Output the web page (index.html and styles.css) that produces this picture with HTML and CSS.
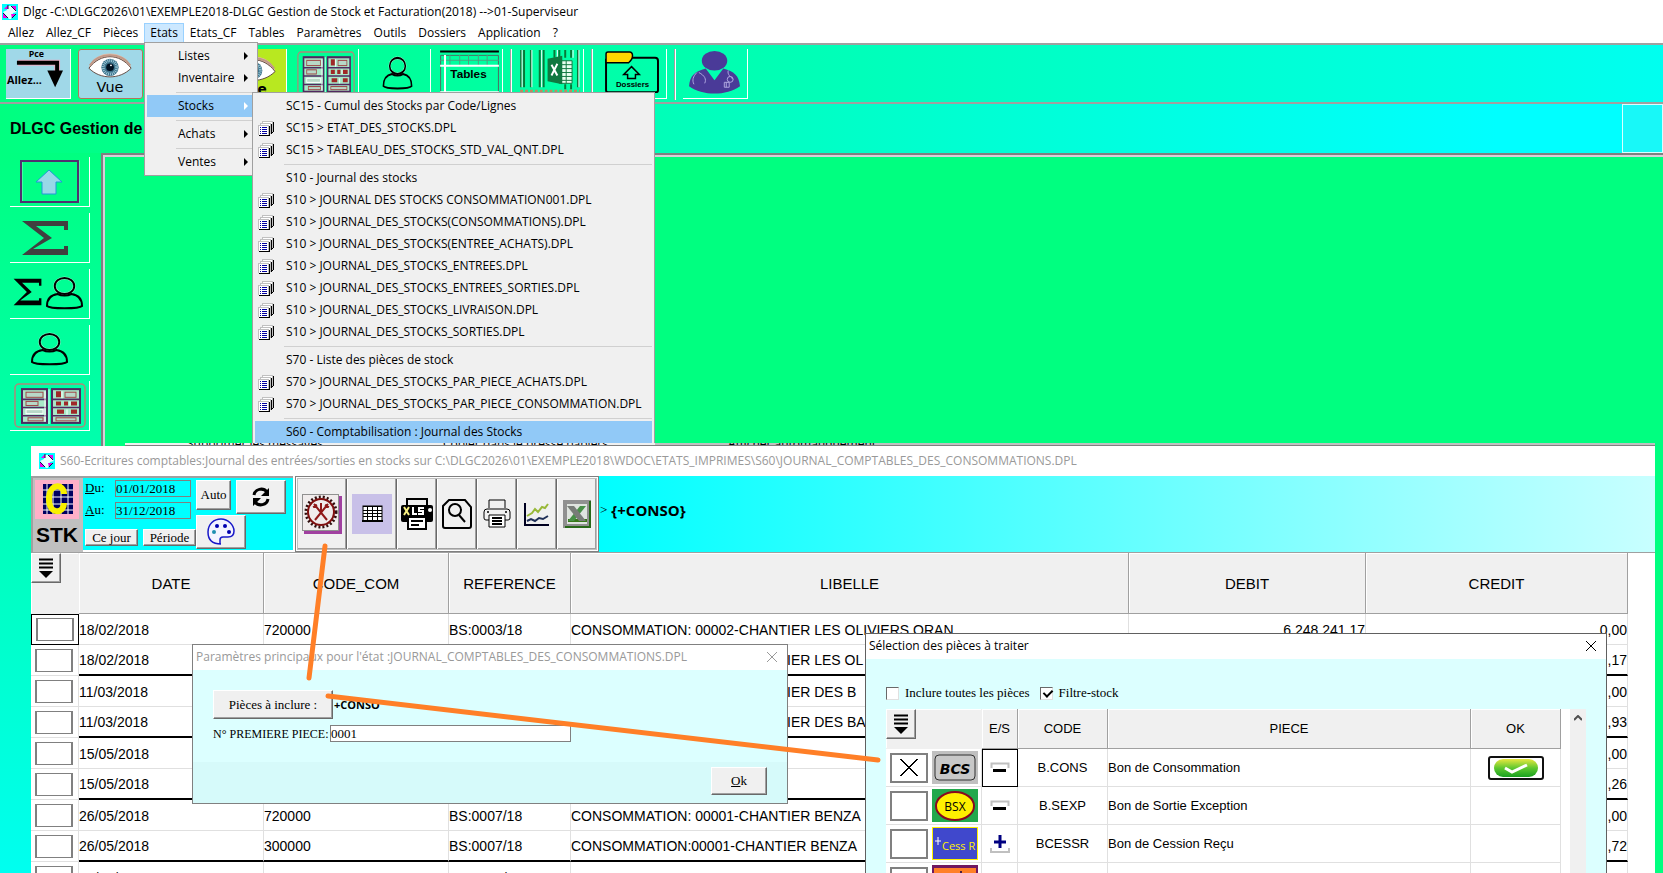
FILE: index.html
```html
<!DOCTYPE html>
<html lang="fr">
<head>
<meta charset="utf-8">
<title>Dlgc - Gestion de Stock et Facturation</title>
<link rel="stylesheet" href="styles.css">
</head>
<body>
<svg width="0" height="0" class="defs" aria-hidden="true">
  <symbol id="logo" viewBox="0 0 16 16">
    <rect width="16" height="16" fill="#00ffff"/>
    <path d="M6 2h3l6 6-4 1-2 6H7L1 8l4-2z" fill="#e8ffff"/>
    <path d="M2 5l4-4v4zM9 2h5v5zM1 9l5 5H1zM9 10h5l-4 4z" fill="#f000f0"/>
    <path d="M6 1v4M9 2l5 5M1 9l5 5M14 10l-4 4" stroke="#102040" fill="none"/>
  </symbol>
  <symbol id="pages" viewBox="0 0 16 15">
    <path d="M4 0h11v11H4z" fill="#c0c0c0"/><path d="M5 1h9v10H5z" fill="#fff"/><path d="M15 1h1v10h-1zM14 11h1v1h-1z"/>
    <path d="M2 2h11v11H2z" fill="#c0c0c0"/><path d="M3 3h9v10H3z" fill="#fff"/><path d="M13 3h1v10h-1z"/>
    <path d="M0 4h11v10H0z" fill="#c0c0c0"/><path d="M1 5h9v9H1z" fill="#fff"/><path d="M11 5h1v10H1v-1h10z"/>
    <path d="M2 6h1v1H2zM4 6h5v1H4zM2 8h1v1H2zM4 8h5v1H4zM2 10h1v1H2zM4 10h5v1H4zM2 12h1v1H2zM4 12h5v1H4z" fill="#0000a0"/>
  </symbol>
  <symbol id="person" viewBox="0 0 40 34" preserveAspectRatio="none">
    <g fill="none" stroke="#fff" stroke-width="3" opacity=".5"><ellipse cx="20" cy="10" rx="10" ry="8"/></g>
    <g fill="none" stroke="#000" stroke-width="2"><ellipse cx="20" cy="10" rx="10" ry="8"/><path d="M13 18C6 19 2 23 2 30c3 3 33 3 36 0 0-7-4-11-11-12-4 2-10 2-14 0z"/></g>
  </symbol>
  <symbol id="cabinet" viewBox="0 0 72 44" preserveAspectRatio="none">
    <rect x="1" y="1" width="70" height="42" rx="4" fill="none" stroke="#b08878" stroke-width="1.500"/>
    <g fill="#a8e8c8" stroke="#502860" stroke-width="2"><rect x="8" y="6" width="25" height="33"/><rect x="38" y="6" width="28" height="33"/></g>
    <path d="M8 16h25M8 24h25M8 32h25M38 16h28M38 24h28M38 32h28" stroke="#502860" stroke-width="1.500"/>
    <g fill="#b8d8c8" stroke="#a04848"><rect x="12" y="9" width="17" height="5"/><rect x="12" y="18" width="12" height="4"/><rect x="12" y="26" width="17" height="4" stroke="#fff"/><rect x="14" y="34" width="15" height="3"/><rect x="51" y="9" width="11" height="5"/><rect x="42" y="34" width="20" height="3"/></g>
    <path d="M42 8h5v6h-5zM42 18h5v4h-5zM50 18h4v4h-4zM57 18h6v4h-6zM43 26h7v4h-7zM57 26h6v4h-6z" fill="#a02828"/>
    <path d="M48 8v7M35 6v34M53 26v5M56 18v4M31 8v30" stroke="#fff"/>
  </symbol>
  <symbol id="sigma" viewBox="0 0 48 36" preserveAspectRatio="none">
    <path d="M1 1h46v9h-4V6H15l16 12L12 29h31v-3h4v9H1l22-17z"/>
  </symbol>
  <symbol id="eye" viewBox="0 0 64 32">
    <path d="M10 17C16-2 48-2 54 17z" fill="#e0bda8"/>
    <path d="M10 18C22 2 42 2 54 18 42 30 22 30 10 18z" fill="#fff" stroke="#604840"/>
    <path d="M11 15C20 1 44 1 53 15" fill="none" stroke="#c09888" stroke-width="2"/>
    <circle cx="32" cy="17" r="9" fill="#3a7088"/><circle cx="32" cy="17" r="7" fill="none" stroke="#9cc8d8" stroke-dasharray="1 1" stroke-width="3"/><circle cx="32" cy="17" r="4" fill="#001020"/><circle cx="33" cy="15" r="1" fill="#fff"/>
  </symbol>
  <symbol id="drop" viewBox="0 0 16 20">
    <path d="M1 1.500h14M1 5.500h14M1 9.500h14" stroke="#000" stroke-width="2"/><path d="M1 13h14l-7 7z"/>
  </symbol>
  <symbol id="minus" viewBox="0 0 20 12">
    <path d="M1.500 6V1.500h17V6" fill="none" stroke="#c0c0c0" stroke-width="2"/><path d="M3 8.500h13" stroke="#000" stroke-width="3"/>
  </symbol>
  <symbol id="close" viewBox="0 0 10 10"><path d="M0 0l10 10M10 0L0 10" stroke="currentColor" fill="none"/></symbol>
  <linearGradient id="shine" x2="0" y2="1"><stop offset="0" stop-color="#e8e840"/><stop offset=".5" stop-color="#60c830"/><stop offset="1" stop-color="#18a020"/></linearGradient>
</svg>

<header class="titlebar"><svg class="ico16"><use href="#logo"/></svg><span>Dlgc -C:\DLGC2026\01\EXEMPLE2018-DLGC Gestion de Stock et Facturation(2018) --&gt;01-Superviseur</span></header>
<nav class="menubar">
  <button>Allez</button><button>Allez_CF</button><button>Pièces</button><button class="open">Etats</button><button>Etats_CF</button><button>Tables</button><button>Paramètres</button><button>Outils</button><button>Dossiers</button><button>Application</button><button>?</button>
</nav>

<div class="toolbar">
  <button class="tool sky" aria-label="Allez"><svg viewBox="0 0 65 50"><text x="23" y="8" class="t-pce">Pce</text><path d="M12 14h40v11" fill="none" stroke="#e8b0c8" stroke-width="6"/><path d="M11 14h41v11" fill="none" stroke="#000" stroke-width="4"/><path d="M42 22h16l-8 17z"/><text x="1" y="36" class="t-allez">Allez...</text></svg></button>
  <button class="tool vue" aria-label="Vue"><svg viewBox="0 0 65 50"><use href="#eye" y="1" width="64" height="32"/><text x="32" y="44" text-anchor="middle" class="t-vue">Vue</text></svg></button>
  <button class="tool vue" aria-label="Vue 2"></button>
  <button class="tool lime" aria-label="Vue liste"><svg viewBox="0 0 65 50"><use href="#eye" y="5" width="64" height="32"/><text x="36" y="46" class="t-e">e</text></svg></button>
  <button class="tool" aria-label="Armoire"><svg viewBox="0 0 65 50"><use href="#cabinet" x="3" y="2" width="59" height="47"/></svg></button>
  <button class="tool" aria-label="Tiers"><svg viewBox="0 0 65 50"><use href="#person" x="16" y="7" width="32" height="35"/></svg></button>
  <button class="tool" aria-label="Tables"><svg viewBox="0 0 65 50"><path d="M2.500 50V6.500h59V50" fill="none" stroke="#506860"/><path d="M2 2.500h60" stroke="#000" stroke-width="2"/><path d="M2 11.500h60M12 6v12M22 6v12M31 6v12M41 6v12M50 6v12" stroke="#50a080"/><path d="M2 17h60M7 6v44M2 44h60" stroke="#fff" stroke-width="2"/><text x="31" y="30" text-anchor="middle" class="t-tables">Tables</text></svg></button>
  <i class="sep"></i>
  <button class="tool" aria-label="Codes barres"><svg viewBox="0 0 65 50"><path d="M2 1v38M5 1v38M12 1v38M21 1v38M25 1v38M36 1v8M41 1v8M47 1v8M53 1v8M60 1v38M47 36v5M53 36v5" stroke="#087838" stroke-width="2"/><path d="M3 1v38M13 1v38M23 1v38M39 1v8M55 1v8M61 1v38" stroke="#fff"/><path d="M41 12h13v23H41z" fill="#e8fff0" stroke="#107840"/><path d="M42 16h12M42 20h12M42 24h12M42 28h12M42 32h12M48 12v23" stroke="#107840"/><path d="M29 10l15-3v29l-15-3z" fill="#107840"/><path d="M33 16l6 11M39 15l-6 12" stroke="#fff" stroke-width="2"/><path d="M1 43h61" stroke="#c08860" stroke-width="3" stroke-dasharray="3 2"/></svg></button>
  <i class="sep"></i>
  <button class="tool folder" aria-label="Dossiers"><svg viewBox="0 0 65 50"><path d="M5 10v32q0 2 2 2h49q2 0 2-2V12q0-3-3-3H30" fill="none" stroke="#000" stroke-width="2"/><path d="M5 14V5q0-2 2-2h22q3 0 3 4t-4 7z" fill="#ffd800" stroke="#000" stroke-width="1.500"/><path d="M31 18l8 8h-4v4h-8v-4h-4z" fill="none" stroke="#000" stroke-width="1.500"/><text x="32" y="39" text-anchor="middle" class="t-dos">Dossiers</text></svg></button>
  <i class="sep"></i>
  <button class="tool" aria-label="Conseiller"><svg viewBox="0 0 65 50"><ellipse cx="32" cy="12" rx="13" ry="10" fill="#4a3a98"/><path d="M6 38c1-11 6-15 17-18l9 12 9-12c11 3 16 7 17 18-14 10-38 10-52 0z" fill="#4a3a98"/><path d="M14 24c-4 4-5 8-3 12M16 24c6 3 8 7 6 11M46 22c-1 4 2 6 5 9" fill="none" stroke="#b0a8e0"/><circle cx="48" cy="31" r="3" fill="none" stroke="#b0a8e0"/><path d="M42 34h5v5h-5zM44 34v5" fill="none" stroke="#b0a8e0"/></svg></button>
</div>
<div class="band"><h1>DLGC Gestion de</h1><div class="corner"></div></div>

<main class="work">
  <aside class="side">
    <button aria-label="Monter"><svg viewBox="0 0 80 50"><rect x="12" y="4" width="57" height="41" fill="none" stroke="#fff" opacity=".5"/><rect x="11" y="4" width="57" height="41" fill="none" stroke="#503070" stroke-width="2"/><path d="M39 13l13 12h-6v12H32V25h-6z" fill="#98d8e8" stroke="#2098d8"/></svg></button>
    <button aria-label="Totaux"><svg viewBox="0 0 80 50"><use href="#sigma" x="11" y="7" width="48" height="36" fill="#404040"/></svg></button>
    <button aria-label="Totaux par tiers"><svg viewBox="0 0 80 50"><use href="#sigma" x="3" y="9" width="29" height="28"/><use href="#person" x="35" y="7" width="39" height="34"/></svg></button>
    <button aria-label="Tiers"><svg viewBox="0 0 80 50"><use href="#person" x="20" y="7" width="39" height="34"/></svg></button>
    <button aria-label="Armoire"><svg viewBox="0 0 80 50"><use href="#cabinet" x="4" y="2" width="72" height="45"/></svg></button>
  </aside>
  <div class="canvas"></div>
</main>
<div class="strip"><span>Supprimer les messages</span><span>Copier dans le presse papiers</span><span>Afficher automatiquement</span></div>

<section class="report">
  <header class="caption"><svg class="ico16"><use href="#logo"/></svg><span>S60-Ecritures comptables:Journal des entrées/sorties en stocks sur C:\DLGC2026\01\EXEMPLE2018\WDOC\ETATS_IMPRIMES\S60\JOURNAL_COMPTABLES_DES_CONSOMMATIONS.DPL</span></header>
  <div class="rbar">
    <div class="stk"><svg viewBox="0 0 44 39"><rect width="44" height="39" fill="#ffb0c8"/><rect x="8" y="4" width="30" height="30" fill="#000060"/><path d="M12 4v30M18 4v30M26 4v30M33 4v30M8 10h30M8 17h30M8 24h30M8 30h30" stroke="#fff"/><path d="M29 14c0-11-15-11-15 5s15 15 15 4" fill="none" stroke="#f8f000" stroke-width="6"/></svg><b>STK</b></div>
    <form class="period">
      <div class="dates">
        <label><span><u>D</u>u:</span><input type="text" value="01/01/2018"></label>
        <label><span><u>A</u>u:</span><input type="text" value="31/12/2018"></label>
        <div class="quick"><button type="button" class="raised">Ce jour</button><button type="button" class="raised">Période</button></div>
      </div>
      <div class="acts">
        <div class="row1"><button type="button" class="raised auto">Auto</button><button type="button" class="raised sq" aria-label="Actualiser"><svg width="20" height="20" viewBox="0 0 20 20"><path d="M3 8c1-6 9-8 13-3M17 12c-1 6-9 8-13 3" fill="none" stroke="#000" stroke-width="3"/><path d="M18 1v8h-8zM2 19v-8h8z"/></svg></button></div>
        <button type="button" class="raised sq" aria-label="Couleurs"><svg width="30" height="28" viewBox="0 0 30 28"><path d="M15 26C5 26 2 20 2 14 2 6 8 1 15 1s13 6 13 12c0 5-3 6-6 6h-5c-2 0-3 1-3 3v4z" fill="#f4f4ff" stroke="#1818c8" stroke-width="1.500"/><g fill="#0000b0"><circle cx="11" cy="8" r="2"/><circle cx="19" cy="8" r="2"/><circle cx="23" cy="14" r="2"/></g><circle cx="8" cy="14" r="2" fill="#2090b0"/></svg></button>
      </div>
    </form>
    <div class="group">
      <button class="raised wide" aria-label="Paramètres"><svg width="40" height="40" viewBox="0 0 40 40"><path d="M2 38h36V2" fill="none" stroke="#a040a0" stroke-width="4"/><rect x="0.500" y="0.500" width="36" height="36" fill="#f0ecec" stroke="#909090"/><circle cx="19" cy="18" r="15" fill="none" stroke="#301010" stroke-width="3" stroke-dasharray="2 2"/><circle cx="19" cy="18" r="13" fill="none" stroke="#801010" stroke-width="2"/><path d="M12 10l13 16M26 10L13 26M19 9v11M11 13l4-2M23 11l4 2" stroke="#901818" stroke-width="2"/></svg></button>
      <button class="raised wide" aria-label="Tableau"><svg width="40" height="40" viewBox="0 0 40 40"><rect width="40" height="40" fill="#c8c0e8"/><rect x="11" y="12" width="19" height="15" fill="#fff" stroke="#000"/><path d="M11 12.500h19M11 16.500h19M11 19.500h19M11 22.500h19M15.500 12v15M20.500 12v15M25.500 12v15" stroke="#000"/><path d="M10 27h21" stroke="#000" stroke-width="2"/></svg></button>
      <button class="raised" aria-label="Imprimer XLS"><svg width="34" height="34" viewBox="0 0 34 34"><path d="M7 8V2h20v6" fill="none" stroke="#000" stroke-width="2"/><rect x="1" y="8" width="32" height="17" rx="2"/><path d="M4 10l5 8M9 10l-5 8" stroke="#f8f080" stroke-width="2"/><path d="M13 10v7h4M24 11h-5v3h4v3h-5" fill="none" stroke="#fff" stroke-width="2"/><circle cx="30" cy="13" r="2" fill="#fff"/><path d="M8 20h18v12H8z" fill="#fff" stroke="#000" stroke-width="2"/><path d="M11 24h12M11 28h8" stroke="#000" stroke-width="2"/></svg></button>
      <button class="raised" aria-label="Aperçu"><svg width="32" height="32" viewBox="0 0 32 32"><path d="M8 2h16l6 7v19q0 2-2 2H4q-2 0-2-2V8z" fill="none" stroke="#000" stroke-width="2"/><circle cx="14" cy="12" r="6" fill="none" stroke="#000" stroke-width="2"/><path d="M18 17l6 7" stroke="#000" stroke-width="2"/></svg></button>
      <button class="raised" aria-label="Imprimer"><svg width="28" height="30" viewBox="0 0 28 30"><path d="M6 9V1h16v8M6 21H3q-2 0-2-2v-6q0-3 3-3h20q3 0 3 3v6q0 2-2 2h-3" fill="none" stroke="#000"/><path d="M6 16h16v12H6z" fill="#fff" stroke="#000"/><path d="M9 19h10M9 22h10M9 25h10" stroke="#000" stroke-width="2"/><circle cx="5" cy="13" r="1"/><circle cx="23" cy="13" r="1"/></svg></button>
      <button class="raised" aria-label="Graphique"><svg width="28" height="26" viewBox="0 0 28 26"><path d="M2 2v22h24" fill="none" stroke="#000020" stroke-width="2"/><path d="M4 15l5-3 3-4 3 3 4-5 3 1 3-4" fill="none" stroke="#98b838" stroke-width="2"/><path d="M4 20l4-2 4 2 4-3 4 1 5-3" fill="none" stroke="#203058" stroke-width="2"/></svg></button>
      <button class="raised" aria-label="Excel"><svg width="28" height="28" viewBox="0 0 28 28"><rect x="2" y="2" width="24" height="24" fill="#dfe4df" stroke="#909090" stroke-width="4"/><path d="M27 1v26H2" fill="none" stroke="#286818" stroke-width="2"/><path d="M5 22h19v-3H5z" fill="#387818"/><path d="M23 6h-6L5 21h6z" fill="#489048"/><path d="M4 6h7l12 15h-7z" fill="#787c78"/></svg></button>
    </div>
    <div class="rband"><span>&gt;</span><b>{+CONSO}</b></div>
  </div>
  <table class="grid">
    <colgroup><col class="c-sel"><col class="c-m"><col class="c-m"><col class="c-ref"><col><col class="c-deb"><col class="c-cre"></colgroup>
    <thead><tr><th class="corner-h"><button class="raised dropb" aria-label="Menu du tableau"><svg width="16" height="20"><use href="#drop"/></svg></button></th><th>DATE</th><th>CODE_COM</th><th>REFERENCE</th><th>LIBELLE</th><th>DEBIT</th><th>CREDIT</th></tr></thead>
    <tbody>
      <tr><td class="focus"><input type="checkbox" aria-label="Ligne 1"></td><td>18/02/2018</td><td>720000</td><td>BS:0003/18</td><td>CONSOMMATION: 00002-CHANTIER LES OLIVIERS ORAN</td><td>6 248 241,17</td><td>0,00</td></tr>
      <tr class="end"><td><input type="checkbox" aria-label="Ligne 2"></td><td>18/02/2018</td><td></td><td></td><td>CONSOMMATION: 00002-CHANTIER LES OL</td><td></td><td>,17</td></tr>
      <tr><td><input type="checkbox" aria-label="Ligne 3"></td><td>11/03/2018</td><td></td><td></td><td>CONSOMMATION: 00003-CHANTIER DES B</td><td></td><td>,00</td></tr>
      <tr class="end"><td><input type="checkbox" aria-label="Ligne 4"></td><td>11/03/2018</td><td></td><td></td><td>CONSOMMATION: 00003-CHANTIER DES BA</td><td></td><td>,93</td></tr>
      <tr><td><input type="checkbox" aria-label="Ligne 5"></td><td>15/05/2018</td><td></td><td></td><td></td><td></td><td>,00</td></tr>
      <tr class="end"><td><input type="checkbox" aria-label="Ligne 6"></td><td>15/05/2018</td><td></td><td></td><td></td><td></td><td>,26</td></tr>
      <tr><td><input type="checkbox" aria-label="Ligne 7"></td><td>26/05/2018</td><td>720000</td><td>BS:0007/18</td><td>CONSOMMATION: 00001-CHANTIER BENZA</td><td></td><td>,00</td></tr>
      <tr class="end"><td><input type="checkbox" aria-label="Ligne 8"></td><td>26/05/2018</td><td>300000</td><td>BS:0007/18</td><td>CONSOMMATION:00001-CHANTIER BENZA</td><td></td><td>,72</td></tr>
      <tr><td><input type="checkbox" aria-label="Ligne 9"></td><td>12/06/2018</td><td>720000</td><td>BS:0010/18</td><td>CONSOMMATION: 00002-CHANTIER DES O</td><td></td><td>,00</td></tr>
    </tbody>
  </table>
</section>

<section class="dialog params">
  <header class="dcap"><span>Paramètres principaux pour l'état :JOURNAL_COMPTABLES_DES_CONSOMMATIONS.DPL</span><button class="x" aria-label="Fermer"><svg width="10" height="10"><use href="#close"/></svg></button></header>
  <div class="pbody">
    <div class="prow"><button class="raised inc">Pièces à inclure :</button><b>+CONSO</b></div>
    <label class="prow"><span class="lab">N° PREMIERE PIECE:</span><input type="text" value="0001"></label>
  </div>
  <footer class="pfoot"><button class="raised"><span><u>O</u>k</span></button></footer>
</section>

<section class="dialog select">
  <header class="dcap"><span>Sélection des pièces à traiter</span><button class="x" aria-label="Fermer"><svg width="10" height="10"><use href="#close"/></svg></button></header>
  <div class="sbody">
    <div class="opts"><label><input type="checkbox">Inclure toutes les pièces</label><label><input type="checkbox" checked>Filtre-stock</label></div>
    <div class="swrap">
    <table class="sgrid">
      <colgroup><col class="s-sel"><col class="s-es"><col class="s-code"><col><col class="s-ok"></colgroup>
      <thead><tr><th class="corner-h"><button class="raised dropb" aria-label="Menu des pièces"><svg width="16" height="20"><use href="#drop"/></svg></button></th><th>E/S</th><th>CODE</th><th>PIECE</th><th>OK</th></tr></thead>
      <tbody>
        <tr><td><div class="pick"><input type="checkbox" class="on" checked aria-label="B.CONS"><svg viewBox="0 0 46 33"><rect width="46" height="33" fill="#c0c0c0"/><rect x="3" y="4" width="40" height="25" rx="4" fill="#c8c8c8" stroke="#303030"/><text x="23" y="23" text-anchor="middle" class="t-bcs">BCS</text></svg></div></td><td class="es focus"><svg width="20" height="12"><use href="#minus"/></svg></td><td>B.CONS</td><td>Bon de Consommation</td><td><svg width="56" height="24" viewBox="0 0 56 24"><rect x="1" y="1" width="54" height="22" rx="2" fill="#fff" stroke="#101010" stroke-width="2"/><rect x="6" y="3" width="44" height="18" rx="9" fill="url(#shine)"/><path d="M17 12l7 4 15-7" fill="none" stroke="#fff" stroke-width="3"/></svg></td></tr>
        <tr><td><div class="pick"><input type="checkbox" aria-label="B.SEXP"><svg viewBox="0 0 46 33"><rect width="46" height="33" fill="#22a84c"/><ellipse cx="23" cy="17" rx="19" ry="14" fill="#fff000" stroke="#880820" stroke-width="2"/><text x="23" y="22" text-anchor="middle" class="t-bsx">BSX</text></svg></div></td><td class="es"><svg width="20" height="12"><use href="#minus"/></svg></td><td>B.SEXP</td><td>Bon de Sortie Exception</td><td></td></tr>
        <tr><td><div class="pick"><input type="checkbox" aria-label="BCESSR"><svg viewBox="0 0 46 33"><rect x=".5" y=".5" width="45" height="32" fill="#4048cc" stroke="#fff000"/><path d="M3 14h6M6 10v8" stroke="#fff"/><text x="10" y="23" class="t-cess">Cess R</text></svg></div></td><td class="es"><svg width="20" height="20" viewBox="0 0 20 20"><path d="M1 14v4h18v-4" fill="none" stroke="#c0c0c0" stroke-width="2"/><path d="M10 1v13M4 8h12" stroke="#000080" stroke-width="3"/></svg></td><td>BCESSR</td><td>Bon de Cession Reçu</td><td></td></tr>
        <tr><td><div class="pick"><input type="checkbox" aria-label="Pièce suivante"><svg viewBox="0 0 46 33"><rect width="46" height="33" fill="#701860"/><rect x="2" y="3" width="42" height="28" fill="#ff8028"/><path d="M4 9h22M29 6v5h4" stroke="#4a2040" stroke-width="2" fill="none" stroke-dasharray="4 1"/></svg></div></td><td></td><td></td><td></td><td></td></tr>
      </tbody>
    </table>
    <div class="scroll"><svg width="8" height="6" viewBox="0 0 8 6"><path d="M0 5l4-4 4 4" fill="none" stroke="#505050" stroke-width="2"/></svg></div>
    </div>
  </div>
</section>

<ul class="menu m1">
  <li>Listes<i></i></li><li>Inventaire<i></i></li><li class="hr"></li><li class="hot">Stocks<i></i></li><li class="hr"></li><li>Achats<i></i></li><li class="hr"></li><li>Ventes<i></i></li>
</ul>
<ul class="menu m2">
  <li>SC15 - Cumul des Stocks par Code/Lignes</li>
  <li><svg><use href="#pages"/></svg>SC15 &gt; ETAT_DES_STOCKS.DPL</li>
  <li><svg><use href="#pages"/></svg>SC15 &gt; TABLEAU_DES_STOCKS_STD_VAL_QNT.DPL</li>
  <li class="hr"></li>
  <li>S10 - Journal des stocks</li>
  <li><svg><use href="#pages"/></svg>S10 &gt; JOURNAL DES STOCKS CONSOMMATION001.DPL</li>
  <li><svg><use href="#pages"/></svg>S10 &gt; JOURNAL_DES_STOCKS(CONSOMMATIONS).DPL</li>
  <li><svg><use href="#pages"/></svg>S10 &gt; JOURNAL_DES_STOCKS(ENTREE_ACHATS).DPL</li>
  <li><svg><use href="#pages"/></svg>S10 &gt; JOURNAL_DES_STOCKS_ENTREES.DPL</li>
  <li><svg><use href="#pages"/></svg>S10 &gt; JOURNAL_DES_STOCKS_ENTREES_SORTIES.DPL</li>
  <li><svg><use href="#pages"/></svg>S10 &gt; JOURNAL_DES_STOCKS_LIVRAISON.DPL</li>
  <li><svg><use href="#pages"/></svg>S10 &gt; JOURNAL_DES_STOCKS_SORTIES.DPL</li>
  <li class="hr"></li>
  <li>S70 - Liste des pièces de stock</li>
  <li><svg><use href="#pages"/></svg>S70 &gt; JOURNAL_DES_STOCKS_PAR_PIECE_ACHATS.DPL</li>
  <li><svg><use href="#pages"/></svg>S70 &gt; JOURNAL_DES_STOCKS_PAR_PIECE_CONSOMMATION.DPL</li>
  <li class="hr"></li>
  <li class="hot">S60 - Comptabilisation : Journal des Stocks</li>
</ul>
<svg class="marks" aria-hidden="true"><path d="M325 546L309 678M328 696L878 760" stroke="#ff7f27" stroke-width="5" stroke-linecap="round" fill="none"/></svg>
</body>
</html>
```
FILE: styles.css
```css
* { box-sizing: border-box; }
html, body { height: 100%; }
body { margin: 0; overflow: hidden; position: relative; display: flex; flex-direction: column; background: #fff; color: #000; font: 12px/16px "Open Sans", "Noto Sans", sans-serif; }
button, input { font: inherit; color: inherit; margin: 0; padding: 0; border: 0; background: none; border-radius: 0; }
svg { display: block; flex: none; }
.defs { position: absolute; }
.ico16 { width: 16px; height: 16px; }

.titlebar { display: flex; align-items: center; gap: 5px; height: 23px; padding-left: 2px; white-space: nowrap; }
.menubar { display: flex; height: 20px; padding-left: 2px; }
.menubar button { padding: 0 6px; }
.menubar .open { background: #cce8ff; box-shadow: inset 0 0 0 1px #99d1ff; }

.toolbar { display: flex; gap: 7px; height: 61px; padding: 4px 6px 0; border-top: 2px solid #a0a0a0; border-bottom: 2px solid #a0a0a0; background: linear-gradient(90deg, #00ff80, #00fff0); }
.tool { flex: none; width: 65px; height: 50px; border-right: 1px solid #fff; border-bottom: 1px solid #fff; }
.tool svg { width: 100%; height: 100%; }
.folder { width: 67px; }
.sky { background: #a0d8e8; }
.vue { background: #a0d8e8; border: 1px solid #b07858; border-radius: 3px; }
.lime { background: #b8e820; }
.sep { flex: none; width: 2px; height: 51px; background: linear-gradient(90deg, #a0a0a0 50%, #fff 50%); }
.t-pce { font: bold 9px "Open Sans", sans-serif; }
.t-allez { font: bold 11px "Open Sans", sans-serif; }
.t-vue { font: 15px "DejaVu Sans", sans-serif; }
.t-e { font: bold 14px "DejaVu Sans", sans-serif; }
.t-tables { font: bold 12px "Liberation Sans", sans-serif; }
.t-dos { font: bold 8px "Liberation Sans", sans-serif; }
.t-bcs { font: italic bold 14px "DejaVu Sans", sans-serif; }
.t-bsx { font: 12px "Open Sans", sans-serif; }
.t-cess { font: 11px "Open Sans", sans-serif; fill: #fff000; }

.band { display: flex; justify-content: space-between; height: 49px; background: linear-gradient(90deg, #00ff80, #00ffff 90%); }
.band h1 { margin: 0; padding: 0 10px; font: bold 16px/49px "Liberation Sans", sans-serif; }
.corner { width: 41px; border: 1px solid #d8ffff; background: #18f8f8; }

.work { flex: 1; display: flex; background: linear-gradient(#00ff80, #00fff0); }
.side { width: 101px; padding: 4px 10px; display: flex; flex-direction: column; gap: 6px; }
.side button { width: 80px; height: 50px; border-right: 1px solid #fff; border-bottom: 1px solid #fff; }
.side svg { width: 80px; height: 50px; }
.canvas { flex: 1; background: #00ff80; border-left: 2px solid #808080; border-top: 2px solid #808080; box-shadow: inset 2px 2px 0 #d8d0d8; }
.strip { position: absolute; left: 125px; right: 8px; top: 443px; height: 3px; padding-left: 62px; display: flex; align-items: center; gap: 120px; overflow: hidden; white-space: nowrap; background: linear-gradient(90deg, #f0f0f0 530px, #c0c0c0 530px); border-bottom: 1px solid #808080; }

.menu { position: absolute; margin: 0; padding: 2px; list-style: none; background: #f0f0f0; border: 1px solid #a0a0a0; white-space: nowrap; }
.menu li { display: flex; align-items: center; height: 22px; padding-left: 31px; }
.menu .hr { height: 6px; padding: 0; }
.menu .hr::before { content: ""; flex: 1; margin-left: 29px; height: 1px; background: #d0d0d0; }
.menu .hot { background: #91c9f7; }
.menu svg { width: 16px; height: 15px; margin: 0 12px 0 -28px; }
.m1 { left: 144px; top: 42px; width: 114px; }
.m1 i { margin-left: auto; margin-right: 7px; border: 4px solid transparent; border-left-color: #000; border-right: 0; }
.m1 .hot i { border-left-color: #fff; }
.m2 { left: 252px; top: 92px; width: 403px; padding-bottom: 0; border-bottom: 0; }

.report { position: absolute; left: 31px; right: 8px; top: 446px; bottom: 0; background: #fff; overflow: hidden; }
.caption { display: flex; align-items: center; gap: 5px; height: 30px; padding-left: 8px; color: #999; white-space: nowrap; }
.rbar { display: flex; height: 77px; border-bottom: 1px solid #a0a0a0; font: 13px/16px "Liberation Serif", serif; }
.stk { width: 52px; padding: 2px 4px 0 2px; border-top: 2px solid #a0a0a0; border-left: 2px solid #a0a0a0; background: #c0c0c0; text-align: center; }
.stk svg { width: 44px; height: 39px; }
.stk b { display: block; font: bold 21px/32px "Liberation Sans", sans-serif; }
.period { display: flex; width: 210px; height: 74px; padding: 2px 0 0 2px; border-top: 2px solid #a0a0a0; background: #00ffff; }
.dates { width: 111px; display: flex; flex-direction: column; gap: 5px; }
.dates label { display: flex; }
.dates span { width: 30px; }
.dates input { width: 76px; height: 17px; border: 1px solid #808080; }
.quick { display: flex; gap: 5px; padding-top: 5px; }
.quick .raised { width: 55px; height: 17px; }
.raised { display: flex; align-items: center; justify-content: center; background: #f0f0f0; border: 1px solid; border-color: #fff #696969 #696969 #fff; box-shadow: inset -1px -1px 0 #a0a0a0; }
.acts .row1 { display: flex; gap: 5px; height: 35px; }
.acts .auto { width: 35px; height: 30px; }
.acts .sq { width: 50px; height: 34px; }
.group { display: flex; margin-left: 2px; padding: 1px; border: 1px solid #808080; outline: 1px solid #c0c0c0; outline-offset: -3px; }
.group .raised { width: 40px; height: 72px; }
.group .wide { width: 50px; }
.rband { flex: 1; display: flex; align-items: center; padding: 0 0 8px 1px; gap: 4px; background: linear-gradient(90deg, #00ffff, #c8ffff); font-size: 13px; }
.rband b { font: bold 15px/18px "Open Sans", sans-serif; }

.grid { width: calc(100% - 27px); table-layout: fixed; border-spacing: 0; font: 14px/16px "Liberation Sans", sans-serif; }
.c-sel { width: 48px; } .c-m { width: 185px; } .c-ref { width: 122px; } .c-deb { width: 237px; } .c-cre { width: 262px; }
th { padding: 0; font-weight: normal; background: #f0f0f0; border-right: 1px solid #a0a0a0; border-bottom: 1px solid #a0a0a0; box-shadow: inset 1px 1px 0 #fff; }
.grid th { height: 61px; padding-top: 2px; font-size: 15px; }
.grid th.corner-h, th.corner-h { padding-top: 0; vertical-align: top; border-color: #f0f0f0; }
.dropb { width: 30px; height: 30px; }
td { padding: 0; white-space: nowrap; overflow: hidden; border-right: 1px solid #e0e0e0; border-bottom: 1px solid #e0e0e0; }
.grid td { height: 31px; padding-top: 1px; }
.grid td:first-child { padding-top: 0; }
.grid td:nth-child(n+6) { text-align: right; }
.grid .end td:not(:first-child) { border-bottom: 2px solid #000; }
td input[type=checkbox] { appearance: none; display: block; width: 38px; height: 23px; margin-left: 4px; background: #fff; border: solid #808080; border-width: 1px 2px; }
.grid td.focus, .sgrid td.focus { border: 1px solid #000; }

.dialog { position: absolute; border: 1px solid #808080; background: #dcffff; font: 13px/16px "Liberation Serif", serif; }
.dcap { display: flex; align-items: center; justify-content: space-between; height: 25px; padding: 0 10px 1px 3px; background: #fff; font: 12px/16px "Open Sans", sans-serif; white-space: nowrap; }
.x { width: 10px; height: 10px; }
.params { left: 192px; top: 644px; width: 596px; }
.params .dcap { color: #999; }
.pbody { height: 92px; padding: 20px 20px 0; display: flex; flex-direction: column; gap: 6px; }
.prow { display: flex; align-items: center; }
.prow .inc { width: 120px; height: 29px; margin-right: 1px; }
.prow b { font: bold 11px/16px "Open Sans", sans-serif; }
.prow .lab { width: 117px; white-space: nowrap; font-size: 12px; }
.prow input { width: 241px; height: 17px; border: 1px solid #808080; background: #fff; }
.pfoot { display: flex; justify-content: flex-end; height: 41px; padding: 5px 20px; background: #d6fafa; }
.pfoot .raised { width: 56px; height: 28px; }

.select { left: 865px; top: 633px; width: 742px; bottom: 0; border-bottom: 0; border-color: #606060; overflow: hidden; }
.sbody { padding: 26px 20px 0; }
.opts { display: flex; gap: 10px; height: 24px; }
.opts label { display: flex; gap: 6px; height: 16px; align-items: center; }
.opts input { appearance: none; width: 13px; height: 13px; background: #fff; border: 1px solid; border-color: #696969 #e0e0e0 #e0e0e0 #696969; }
.opts input:checked::after { content: ""; display: block; width: 4px; height: 7px; margin: 0 0 0 4px; border: solid #000; border-width: 0 2px 2px 0; transform: rotate(45deg); }
.swrap { display: flex; }
.sgrid { flex: 1; table-layout: fixed; border-spacing: 0; background: #fff; font: 13px/16px "Liberation Sans", sans-serif; }
.s-sel { width: 96px; } .s-es { width: 36px; } .s-code { width: 90px; } .s-ok { width: 90px; }
.sgrid th { height: 40px; }
.sgrid td { height: 38px; text-align: center; }
.sgrid td:nth-child(4) { text-align: left; }
.sgrid td svg { margin: auto; }
.pick { display: flex; gap: 4px; align-items: center; }
.sgrid td .pick svg { width: 46px; height: 33px; margin: 0; }
.sgrid td input[type=checkbox] { height: 30px; border-width: 2px; }
.sgrid .on { background: linear-gradient(45deg, transparent 48%, #000 48%, #000 52%, transparent 52%) center / 22px 17px no-repeat, linear-gradient(-45deg, transparent 48%, #000 48%, #000 52%, transparent 52%) center / 22px 17px no-repeat, #fff; }
.scroll { width: 25px; padding: 6px 0 0 13px; background: linear-gradient(90deg, #fff 9px, #f0f0f0 9px); }
.marks { position: absolute; inset: 0; width: 100%; height: 100%; pointer-events: none; }
```
